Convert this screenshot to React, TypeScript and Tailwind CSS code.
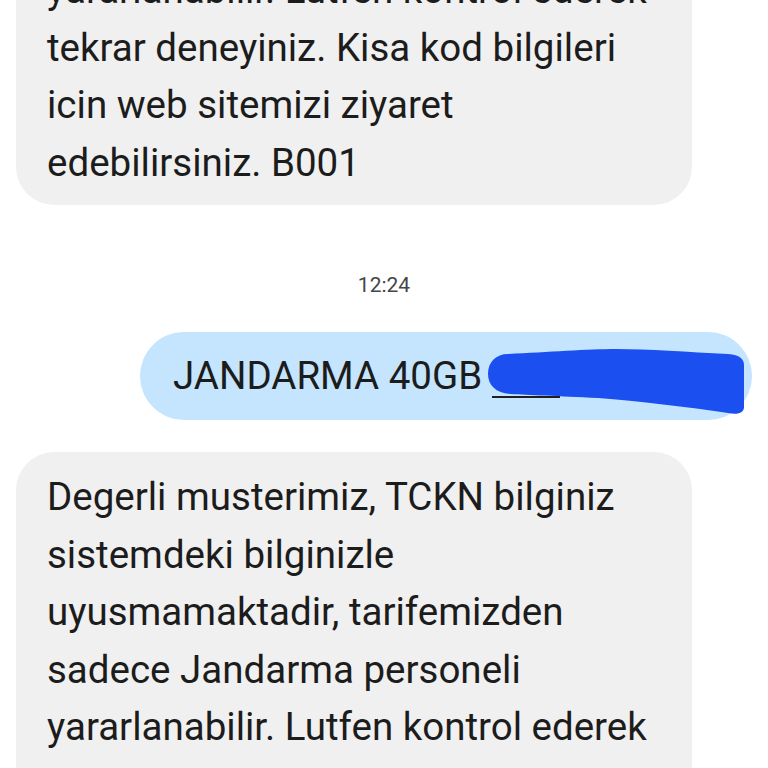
import React from "react";

const font = { fontFamily: "Roboto, 'Noto Sans', sans-serif" };

function Lines({ lines }: { lines: string[] }) {
  return (
    <>
      {lines.map((l, i) => (
        <div key={i} className="whitespace-nowrap">
          {l}
        </div>
      ))}
    </>
  );
}

export default function App() {
  return (
    <div
      className="relative w-[768px] h-[768px] overflow-hidden bg-white text-[#1c1c1c]"
      style={font}
    >
      <div className="flex flex-col">
        {/* received bubble (cut off at top) */}
        <div className="mt-[-60px] ml-[16px] w-[676px] rounded-b-[38px] bg-[#f0f0f0] pl-[31px] pr-[20px] pt-[21px] pb-[14px] text-[38.5px] leading-[57.5px]">
          <Lines
            lines={[
              "yararlanabilir. Lutfen kontrol ederek",
              "tekrar deneyiniz. Kisa kod bilgileri",
              "icin web sitemizi ziyaret",
              "edebilirsiniz. B001",
            ]}
          />
        </div>

        {/* timestamp */}
        <div className="mt-[68px] flex justify-center text-[21px] leading-[24px] text-[#444746]">
          12:24
        </div>

        {/* sent bubble */}
        <div className="mt-[35px] flex justify-end pr-[16px]">
          <div className="relative flex h-[88px] w-[612px] items-center rounded-full bg-[#c4e5fd] pl-[33px] text-[38.5px]">
            <span className="whitespace-nowrap">JANDARMA 40GB</span>
            <div className="absolute left-[352px] top-[64px] h-[2px] w-[68px] bg-[#1f1f1f]" />
            <svg
              className="absolute left-[348px] top-[17px]"
              width="258"
              height="66"
              viewBox="0 0 258 66"
            >
              <path
                d="M20 5 C60 3 100 0 128 0 C160 0 200 3 240 5 C252 6 256 10 256 16 L256 58 C256 64 250 66 240 64 C200 58 150 52 110 49 C70 47 40 46 22 45 C8 44 0 36 0 25 C0 13 8 5 20 5 Z"
                fill="#1b4ff0"
              />
            </svg>
          </div>
        </div>

        {/* received bubble 2 */}
        <div className="mt-[32px] ml-[16px] w-[676px] rounded-t-[38px] bg-[#f0f0f0] pl-[31px] pr-[20px] pt-[16px] pb-[40px] text-[38.5px] leading-[57.5px]">
          <Lines
            lines={[
              "Degerli musterimiz, TCKN bilginiz",
              "sistemdeki bilginizle",
              "uyusmamaktadir, tarifemizden",
              "sadece Jandarma personeli",
              "yararlanabilir. Lutfen kontrol ederek",
            ]}
          />
        </div>
      </div>
    </div>
  );
}
